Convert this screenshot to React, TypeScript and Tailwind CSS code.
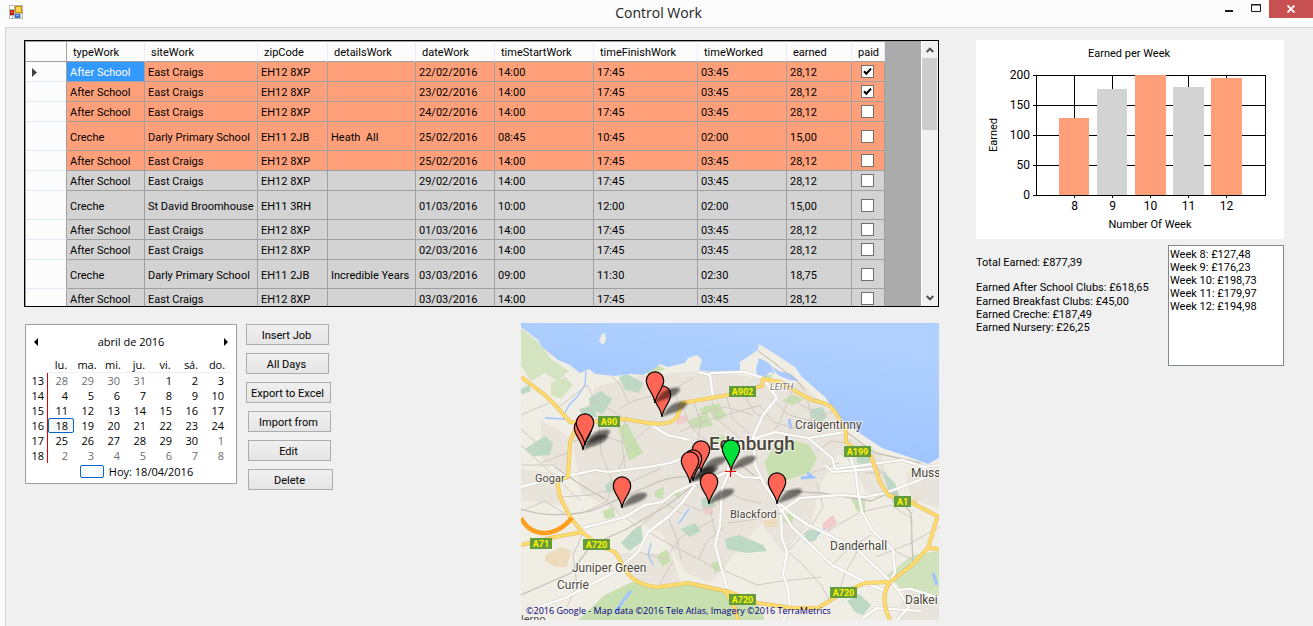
import React from "react";

type Job = {
  type: string;
  site: string;
  zip: string;
  details?: string;
  date: string;
  start: string;
  finish: string;
  worked: string;
  earned: string;
  paid?: boolean;
};

const afterSchool = (date: string, paid = false): Job => ({
  type: "After School",
  site: "East Craigs",
  zip: "EH12 8XP",
  date,
  start: "14:00",
  finish: "17:45",
  worked: "03:45",
  earned: "28,12",
  paid,
});

const jobs: Job[] = [
  afterSchool("22/02/2016", true),
  afterSchool("23/02/2016", true),
  afterSchool("24/02/2016"),
  { type: "Creche", site: "Darly Primary School", zip: "EH11 2JB", details: "Heath  All", date: "25/02/2016", start: "08:45", finish: "10:45", worked: "02:00", earned: "15,00" },
  afterSchool("25/02/2016"),
  afterSchool("29/02/2016"),
  { type: "Creche", site: "St David Broomhouse", zip: "EH11 3RH", date: "01/03/2016", start: "10:00", finish: "12:00", worked: "02:00", earned: "15,00" },
  afterSchool("01/03/2016"),
  afterSchool("02/03/2016"),
  { type: "Creche", site: "Darly Primary School", zip: "EH11 2JB", details: "Incredible Years", date: "03/03/2016", start: "09:00", finish: "11:30", worked: "02:30", earned: "18,75" },
  afterSchool("03/03/2016"),
];

const columns = [
  { name: "typeWork", width: "w-[78px]" },
  { name: "siteWork", width: "w-[113px]" },
  { name: "zipCode", width: "w-[70px]" },
  { name: "detailsWork", width: "w-[88px]" },
  { name: "dateWork", width: "w-[79px]" },
  { name: "timeStartWork", width: "w-[99px]" },
  { name: "timeFinishWork", width: "w-[104px]" },
  { name: "timeWorked", width: "w-[89px]" },
  { name: "earned", width: "w-[65px]" },
  { name: "paid", width: "w-[33px]" },
];

function TitleBar() {
  return (
    <header className="grid h-[27px] grid-cols-[1fr_auto_1fr] items-start">
      <svg className="mt-[5px] ml-[9px]" width="14" height="14" viewBox="0 0 14 14" aria-hidden="true">
        <rect width="14" height="14" fill="#b8b8b8" />
        <path d="M1 1h4v3H1zM1 11h2v2H1zM4 11h1v2H4zM12 9h1v4h-1z" fill="#fff" />
        <rect x="6" y="1" width="7" height="7" fill="#c98f00" />
        <rect x="7" y="2" width="5" height="5" fill="#fcd34a" />
        <rect x="1" y="5" width="4" height="5" fill="#b5200f" />
        <rect x="2" y="6" width="2" height="2" fill="#e2604a" />
        <rect x="6" y="9" width="5" height="4" fill="#3c74cc" />
        <rect x="7" y="10" width="3" height="1" fill="#8ab4f4" />
      </svg>
      <h1 className="pt-[3px] pl-1 font-['Open_Sans','Noto_Sans',sans-serif] text-[14px] leading-[20px] text-[#222]">Control Work</h1>
      <div className="flex justify-end">
        <button type="button" aria-label="Minimize" className="flex h-[18px] w-[28px] items-start justify-center">
          <svg className="mt-[10px]" width="8" height="2"><rect width="8" height="2" fill="#1a1a1a" /></svg>
        </button>
        <button type="button" aria-label="Maximize" className="flex h-[18px] w-[26px] items-start justify-center">
          <svg className="mt-1" width="10" height="8"><path d="M.5 .5h9v7h-9zM0 1h10" fill="none" stroke="#1a1a1a" /></svg>
        </button>
        <button type="button" aria-label="Close" className="flex h-[18px] w-11 items-center justify-center bg-[#c75050]">
          <svg width="8" height="8" viewBox="0 0 8 8"><path d="M.5 .5l7 7M7.500 .5l-7 7" stroke="#fff" strokeWidth="1.800" /></svg>
        </button>
      </div>
    </header>
  );
}

function PaidBox({ checked, label }: { checked?: boolean; label: string }) {
  return (
    <span className="relative mx-auto block size-[13px]">
      <input type="checkbox" defaultChecked={checked} aria-label={label} className="peer block size-[13px] appearance-none border border-[#707070] bg-white" />
      <svg className="pointer-events-none absolute inset-0 hidden peer-checked:block" width="13" height="13" viewBox="0 0 13 13">
        <path d="M3 6.200L5.300 8.700L10 3.600" fill="none" stroke="#000" strokeWidth="2" />
      </svg>
    </span>
  );
}

function JobsGrid() {
  return (
    <div className="flex h-[267px] overflow-hidden border border-black bg-[#ababab]">
      <div className="min-w-0 flex-1 overflow-hidden border-t border-l border-[#a0a0a0]">
        <table className="w-[859px] table-fixed border-separate border-spacing-0 text-left text-[11px] leading-[13px] whitespace-pre">
          <colgroup>
            <col className="w-[41px]" />
            {columns.map((c) => (
              <col key={c.name} className={c.width} />
            ))}
          </colgroup>
          <thead>
            <tr className="h-5 bg-[#fcfcfc]">
              <th aria-label="Row" className="border-r border-b border-[#a0a0a0] p-0" />
              {columns.map((c) => (
                <th key={c.name} className="border-r border-b border-r-[#e3ecfa] border-b-[#a0a0a0] p-0 pt-[2px] pl-[6px] font-normal">{c.name}</th>
              ))}
            </tr>
          </thead>
          <tbody>
            {jobs.map((job, i) => {
              const values = [job.type, job.site, job.zip, job.details ?? "", job.date, job.start, job.finish, job.worked, job.earned];
              return (
                <tr key={i} className={`${job.type === "Creche" ? "h-[29px]" : "h-5"} ${i < 5 ? "bg-[#ffa07a]" : "bg-[#d3d3d3]"}`}>
                  <td className="border-r border-b border-r-[#a0a0a0] border-b-[#e3ecfa] bg-[#fcfcfc] p-0 pt-[2px] pl-[6px]">
                    {i === 0 && <svg width="5" height="9" className="block"><path d="M0 0v9L5 4.500z" fill="#404040" /></svg>}
                  </td>
                  {values.map((v, j) => (
                    <td key={j} className={`border-r border-b border-[#a0a0a0] p-0 pt-[2px] pl-[3px] ${i === 0 && j === 0 ? "bg-[#3399ff] text-white" : ""}`}>{v}</td>
                  ))}
                  <td className="border-r border-b border-[#a0a0a0] p-0 pr-px">
                    <PaidBox checked={job.paid} label={`Paid ${job.date}`} />
                  </td>
                </tr>
              );
            })}
          </tbody>
        </table>
      </div>
      <div className="flex w-[17px] flex-col border-l border-white bg-[#f0f0f0]">
        <button type="button" aria-label="Scroll up" className="flex h-[17px] items-center justify-center">
          <svg width="8" height="6"><path d="M.7 5L4 1.700L7.300 5" fill="none" stroke="#505050" strokeWidth="2" /></svg>
        </button>
        <div className="h-[72px] w-[15px] bg-[#cdcdcd]" />
        <button type="button" aria-label="Scroll down" className="mt-auto flex h-[17px] items-center justify-center">
          <svg width="8" height="6"><path d="M.7 1L4 4.300L7.300 1" fill="none" stroke="#505050" strokeWidth="2" /></svg>
        </button>
      </div>
    </div>
  );
}

const weeks = [
  { n: 13, days: [28, 29, 30, 31, 1, 2, 3] },
  { n: 14, days: [4, 5, 6, 7, 8, 9, 10] },
  { n: 15, days: [11, 12, 13, 14, 15, 16, 17] },
  { n: 16, days: [18, 19, 20, 21, 22, 23, 24] },
  { n: 17, days: [25, 26, 27, 28, 29, 30, 1] },
  { n: 18, days: [2, 3, 4, 5, 6, 7, 8] },
];

const outside = (week: number, day: number) => (week === 13 && day > 20) || (week >= 17 && day < 20);

function Calendar() {
  return (
    <section aria-label="Calendar" className="h-[160px] w-[212px] border border-[#a0a0a0] bg-white pr-[6px] pl-[5px] font-['Open_Sans','Noto_Sans',sans-serif] text-[11px] text-black">
      <div className="flex h-8 items-center justify-between pt-px pr-[2px] pl-[3px]">
        <button type="button" aria-label="Previous month"><svg width="4" height="8"><path d="M4 0v8L0 4z" /></svg></button>
        <span>abril de 2016</span>
        <button type="button" aria-label="Next month"><svg width="4" height="8"><path d="M0 0v8L4 4z" /></svg></button>
      </div>
      <table className="w-full table-fixed border-separate border-spacing-0 leading-[15px]">
        <colgroup>
          <col className="w-[17px]" />
        </colgroup>
        <thead>
          <tr className="h-[15px]">
            <th aria-label="Week" className="p-0" />
            {["lu.", "ma.", "mi.", "ju.", "vi.", "sá.", "do."].map((d) => (
              <th key={d} className="border-b border-[#f0f0f0] p-0 text-center font-normal">{d}</th>
            ))}
          </tr>
        </thead>
        <tbody>
          {weeks.map((w) => (
            <tr key={w.n} className="h-[15px]">
              <th className="border-r border-[#e00000] p-0 pr-[3px] text-right font-normal">{w.n}</th>
              {w.days.map((d, i) => (
                <td key={i} className={`p-0 pr-[6px] text-right ${outside(w.n, d) ? "text-[#6d6d6d]" : ""} ${w.n === 16 && i === 0 ? "rounded-[2px] bg-[#f7f7f7] outline outline-[#0066cc] -outline-offset-1" : ""}`}>{d}</td>
              ))}
            </tr>
          ))}
        </tbody>
      </table>
      <div className="flex items-center justify-center gap-[5px] pl-3 leading-[17px]">
        <span className="h-[13px] w-6 rounded-[2px] border border-[#0066cc]" />
        <span>Hoy: 18/04/2016</span>
      </div>
    </section>
  );
}

function Action({ label, wide }: { label: string; wide?: boolean }) {
  return (
    <button type="button" className={`${wide ? "w-[85px]" : "w-[83px]"} h-[21px] border border-[#acacac] bg-linear-to-b from-[#f0f0f0] to-[#e5e5e5] pt-px pr-[2px] text-center text-[11px] leading-[13px] whitespace-nowrap`}>
      {label}
    </button>
  );
}

function Pin({ x, y, fill = "#ff6455" }: { x: number; y: number; fill?: string }) {
  return (
    <g transform={`translate(${x} ${y})`}>
      <path d="M0 0C4 -8 9 -14 18 -15C25 -16 27 -14 23 -10C18 -5 8 -4 0 0Z" fill="#000" opacity=".5" filter="url(#soft)" />
      <path d="M0 0C-1 -10 -8.700 -14 -8.700 -22.500A8.700 8.700 0 0 1 8.700 -22.500C8.700 -14 1 -10 0 0Z" fill={fill} stroke="#000" strokeWidth="1.200" />
    </g>
  );
}

const minorRoads = [
  "M57 100L74 78L66 62L37 85M74 78L105 96M104 96L101 120L104 146M131 102L110 120L98 146M78 100L80 130L92 160",
  "M98 86L112 78L150 68L172 55M108 80L98 60L90 53M152 70L160 80L170 104L190 122M172 76L180 100L176 122M190 74L196 96L222 118",
  "M176 92L204 84L232 92M160 108L190 96L240 82M205 72L212 96L228 110M222 70L234 90L246 96M250 76L268 92L290 98L312 88M262 60L280 82L300 92",
  "M239 83L252 99L280 107L304 90M270 70L260 96L252 110M286 74L292 104M296 128L310 118L326 120M290 150L318 140",
  "M0 92L28 80M0 122L30 150L60 178M0 106L20 124M48 119L80 112L104 120M46 130L20 140M0 142L34 142",
  "M39 174L70 172L104 162L140 145M49 194L24 178L0 188M62 190L86 178L101 194M86 178L92 160M62 210L52 232L56 262L46 284",
  "M104 194L118 205L144 180L160 190M127 209L150 222L178 236L198 248M117 229L144 236L160 214L194 196M178 236L186 218L204 204",
  "M147 194L156 216L160 236M161 180L180 188L204 178M174 160L186 174L190 190L194 210M137 264L152 238",
  "M201 165L220 176L240 180M207 200L236 196L260 190M204 248L236 262L262 258L300 254M264 226L280 240L300 262L310 280",
  "M266 229L282 212L290 204M290 204L302 184L296 160M304 210L320 200L338 190M311 242L330 224L350 212M337 227L324 250L318 270",
  "M341 189L370 182L391 196L390 222M355 234L390 220L418 204M334 142L320 130L330 116M344 150L366 150M372 227L390 236M360 150L350 134L330 130",
];

const whiteRoads = [
  "M62 205L104 194L124 182L141 179L154 169L174 160",
  "M174 162L161 180L147 194L127 209L117 229L94 249L44 275L4 289",
  "M0 164L27 157L74 147L87 149L127 144L149 140L169 132",
  "M256 75L242 92L232 114L234 142L242 159L259 185L271 204L311 242L344 259L366 269",
  "M257 179L271 191L287 202L304 210L337 227L371 260L377 267L390 266L418 275",
  "M260 192L261 215L266 229L262 252L267 265L269 285L262 297",
  "M259 189L279 175L321 172L344 174L364 170L391 160L418 149",
  "M334 142L337 169L341 189L351 207L372 227L374 249L369 259",
  "M232 116L254 109L287 115L324 109M287 115L311 135L314 146L381 137L404 144L418 142M325 119L332 142",
  "M177 49L189 52L192 74M189 50L224 49L242 55L256 75",
  "M207 142L207 152L201 165L199 202L194 222L206 265M207 145L222 154L239 155",
  "M131 102L146 112L169 117M304 142L312 149L352 146",
  "M342 295L356 285L400 288M377 267L388 284L376 297M174 160L188 158L207 148",
];

const yellowRoads = [
  "M0 54L24 72L37 85L49 99L57 100L104 96L127 100Q150 103 156 94L161 80L207 72L241 63L242 56L259 59L276 69L291 77Q305 80 310 84Q318 93 325 109L325 119L336 128L350 133L355 147L359 159L367 172L391 180L418 194",
  "M57 100L49 119L47 154L36 157L39 174L49 194L62 210L81 224L94 229L106 249Q114 262 137 264L167 260L209 269L237 280L271 285L297 285L321 270L344 260L369 259L391 242L407 225L416 195",
  "M0 222L34 214L62 209M369 259Q358 274 369 297M407 225L418 226M204 268L214 285L217 297",
];

const towns = [
  { x: 249, y: 67, s: 9, t: "LEITH", italic: true },
  { x: 274, y: 106, s: 12, t: "Craigentinny" },
  { x: 14, y: 159, s: 11, t: "Gogar" },
  { x: 209, y: 195, s: 11, t: "Blackford" },
  { x: 309, y: 227, s: 12, t: "Danderhall" },
  { x: 51, y: 249, s: 12, t: "Juniper Green" },
  { x: 36, y: 266, s: 12, t: "Currie" },
  { x: 390, y: 154, s: 12, t: "Muss" },
  { x: 384, y: 281, s: 12, t: "Dalkei" },
  { x: 0, y: 300, s: 11, t: "lerno" },
];

const shields = [
  { x: 77, y: 93, w: 22, t: "A90" },
  { x: 208, y: 63, w: 27, t: "A902" },
  { x: 323, y: 123, w: 27, t: "A199" },
  { x: 9, y: 215, w: 22, t: "A71" },
  { x: 62, y: 216, w: 27, t: "A720" },
  { x: 373, y: 173, w: 17, t: "A1" },
  { x: 309, y: 264, w: 27, t: "A720" },
  { x: 208, y: 271, w: 27, t: "A720" },
];

function CityMap() {
  return (
    <svg role="img" aria-label="Map of Edinburgh" width="418" height="297" viewBox="0 0 418 297" className="block shrink-0 overflow-hidden">
      <defs>
        <filter id="soft"><feGaussianBlur stdDeviation="0.8" /></filter>
        <linearGradient id="sea" x1="0" y1="1" x2=".4" y2="0">
          <stop offset="0" stopColor="#98bfff" />
          <stop offset="1" stopColor="#b0d1ff" />
        </linearGradient>
      </defs>
      <rect width="418" height="297" fill="#f0ede5" />
      <g fill="#e8e3db">
        <path d="M74 64L110 54L180 48L240 55L280 60L318 97L325 119L300 160L290 200L262 230L240 200L190 260L165 250L140 210L80 180L60 170L52 120L60 98Z" />
        <path d="M95 230L150 230L160 262L117 259ZM0 146L34 150L40 182L0 178ZM384 150L418 145V186L390 175ZM384 266L418 272V297H376ZM320 112L360 130L370 170L345 170ZM20 98L52 116L46 150L20 136Z" />
      </g>
      <g fill="#c8dfb0">
        <path d="M57 297L84 272L111 259L137 265L167 261L209 270L237 281L244 297Z" />
        <path d="M244 139L252 125L272 117L288 122L296 135L289 149L266 157L247 152Z" />
        <path d="M0 5L18 20L30 36L48 48L36 58L24 50L10 58L0 42ZM30 60L44 54L52 62L40 76L30 72Z" opacity=".7" />
        <path d="M97 104L106 100L122 130L108 138ZM166 98L186 90L192 103L172 106ZM187 84L198 80L206 94L194 98ZM134 168L143 164L142 176L134 174ZM82 188L92 184L94 194L84 196ZM178 86L188 82L192 88L182 92ZM188 114L202 112L208 120L190 122ZM260 78L272 72L284 76L272 82ZM330 176L344 174L344 190L336 188ZM190 240L200 238L204 246L194 250ZM135 233L146 226L150 238L142 244ZM122 50L136 42L144 46L132 52ZM262 192L274 190L270 202L262 198ZM238 52L252 52L244 60ZM204 140L214 136L212 146ZM150 170L160 166L158 176Z" />
        <path d="M366 252L392 232L418 228V272L380 265Z" opacity=".8" />
      </g>
      <g fill="#bdd8c4">
        <path d="M98 54L106 51L122 60L118 70L104 67ZM68 75L80 68L91 76L82 91L70 87ZM58 86L72 82L76 94L62 94ZM4 126L24 113L32 120L29 132L12 133ZM100 220L112 207L120 202L122 218L108 228ZM84 162L94 156L94 168L86 170ZM160 206L174 200L180 208L168 214ZM290 86L302 84L306 94L300 100L290 94ZM204 216L218 212L242 222L246 228L226 230L206 226ZM284 210L294 204L300 208L294 218L284 220ZM326 278L338 271L350 282L342 292L334 289ZM180 176L192 172L194 184L182 186ZM336 134L350 130L348 142L336 140ZM0 66L8 62L10 68L0 72ZM360 146L374 160L382 182L372 180Z" />
      </g>
      <path d="M24 232L40 224L50 228L46 244L34 244L24 238ZM242 198L256 194L256 204L244 204ZM388 176L398 174L396 182L388 180Z" fill="#ecdcbd" />
      <path d="M302 200L312 192L316 200L308 207L302 206ZM154 94L164 92L168 98L156 102ZM183 184L192 184L192 191L184 192ZM182 150L190 148L192 156L184 156Z" fill="#f1cbc9" />
      <path d="M0 0H418V135L407 141L391 135L361 125L334 107L319 97L304 74L281 54L274 44L251 29L238 21L237 27L219 39L219 47L209 49L191 49L178 47L181 37L176 32L167 35L164 40L147 44L139 41L131 47L122 52L109 51L94 53L74 51L68 46L59 50L49 42L37 37L21 24L17 17L0 4Z" fill="url(#sea)" />
      <path d="M81 11L84 10L85 17L82 22L78 18Z" fill="#f0ede5" />
      <path d="M235 46L238 35L248 40L254 51L249 49L244 54L236 52ZM249 42L258 48L270 51L278 58L268 57L257 52Z" fill="#accbff" />
      <path d="M237 28L251 38L266 50L278 60L284 68" fill="none" stroke="#bcb8b0" />
      <g fill="none" stroke="#9fc4ff" strokeWidth="1.300">
        <path d="M65 48L64 62L56 74L48 82L42 94M24 95L44 96M130 220L127 232L132 242M168 186L158 200M296 212L304 206" />
        <path d="M94 290L102 278L110 268M280 155L292 154L286 150M268 96L270 106M412 250L416 262" strokeWidth="3" />
      </g>
      <g fill="none" stroke="#c5c1bb" strokeWidth="1.300">
        <path d="M0 186Q30 196 70 188L130 162Q150 152 174 154M0 272L50 250L70 222L104 207L147 182L180 156M34 144L60 162L84 176" />
        <path d="M180 156L220 142L240 158L262 168L300 170L350 178L372 168L390 190L392 244M324 108L354 130L400 140" />
      </g>
      <g fill="none" stroke="#d0cac1" strokeWidth="1">{minorRoads.map((d) => <path key={d} d={d} />)}</g>
      <g fill="none" stroke="#d9d5cd" strokeWidth="3.400" strokeLinejoin="round">{whiteRoads.map((d) => <path key={d} d={d} />)}</g>
      <g fill="none" stroke="#fff" strokeWidth="2.200" strokeLinejoin="round">{whiteRoads.map((d) => <path key={d} d={d} />)}</g>
      <g fill="none" stroke="#e3bd62" strokeWidth="4" strokeLinejoin="round">{yellowRoads.map((d) => <path key={d} d={d} />)}</g>
      <g fill="none" stroke="#ffdc6e" strokeWidth="2.800" strokeLinejoin="round">{yellowRoads.map((d) => <path key={d} d={d} />)}</g>
      <path d="M0 195Q8 210 24 210Q38 210 51 195" fill="none" stroke="#ff9f1f" strokeWidth="4.500" />
      {shields.map((s, i) => (
        <g key={i}>
          <rect x={s.x} y={s.y} width={s.w} height="11" fill="#659c3b" />
          <text x={s.x + s.w / 2} y={s.y + 9} textAnchor="middle" fill="#fff200" className="font-[Roboto,sans-serif] text-[9px] font-bold">{s.t}</text>
        </g>
      ))}
      <g className="font-[Roboto,sans-serif]" fill="#4b463b" stroke="#fff" strokeOpacity=".7" strokeWidth="2" paintOrder="stroke">
        {towns.map((t) => (
          <text key={t.t} x={t.x} y={t.y} fontSize={t.s} fontStyle={t.italic ? "italic" : "normal"} fill={t.italic ? "#777268" : undefined}>{t.t}</text>
        ))}
        <text x="188" y="127" fontSize="19" className="font-medium">Edinburgh</text>
      </g>
      <Pin x={141} y={94} />
      <Pin x={134} y={80} />
      <Pin x={62} y={127} />
      <Pin x={64} y={122} />
      <Pin x={180} y={149} />
      <Pin x={172} y={158} />
      <Pin x={169} y={160} />
      <Pin x={101} y={185} />
      <Pin x={188} y={181} />
      <Pin x={256} y={181} />
      <Pin x={210} y={148} fill="#00e13c" />
      <path d="M204 148.500H215M209.500 143V154" stroke="#f00" />
      <text x="5" y="291" fill="#000080" className="font-['Open_Sans',sans-serif] text-[9px]">©2016 Google - Map data ©2016 Tele Atlas, Imagery ©2016 TerraMetrics</text>
    </svg>
  );
}

const bars = [
  { week: 8, x: 83, top: 78, w: 30, fill: "#ffa07a" },
  { week: 9, x: 121, top: 49, w: 30, fill: "#d3d3d3" },
  { week: 10, x: 159, top: 35, w: 31, fill: "#ffa07a" },
  { week: 11, x: 197, top: 47, w: 31, fill: "#d3d3d3" },
  { week: 12, x: 235, top: 38, w: 31, fill: "#ffa07a" },
];

function EarnedChart() {
  return (
    <svg role="img" aria-label="Earned per Week" width="308" height="199" viewBox="0 0 308 199" className="block bg-white font-[Roboto,sans-serif]">
      <text x="153" y="17" textAnchor="middle" className="text-[11px]">Earned per Week</text>
      {[200, 150, 100, 50, 0].map((v, i) => (
        <g key={v}>
          <path d={`M57 ${35.5 + i * 30}H290`} stroke="#000" />
          <text x="54" y={39 + i * 30} textAnchor="end" className="text-[12px]">{v}</text>
        </g>
      ))}
      <path d="M60.500 35V156M289.500 35V156" stroke="#000" />
      {bars.map((b, i) => (
        <g key={b.week}>
          <path d={`M${98.5 + i * 38} 35V158`} stroke="#000" />
          <rect x={b.x} y={b.top} width={b.w} height={155 - b.top} fill={b.fill} />
          <text x={98.5 + i * 38} y="170" textAnchor="middle" className="text-[12px]">{b.week}</text>
        </g>
      ))}
      <text x="174" y="188" textAnchor="middle" className="text-[11px]">Number Of Week</text>
      <text transform="translate(21 95) rotate(-90)" textAnchor="middle" className="text-[11px]">Earned</text>
    </svg>
  );
}

export default function App() {
  return (
    <div className="flex min-h-screen flex-col bg-[#fcfcfc] font-[Roboto,'Liberation_Sans',sans-serif] text-[11px] leading-[13px] text-black">
      <TitleBar />
      <main className="ml-[5px] flex flex-1 gap-[37px] border-t border-l border-[#d4d4d4] bg-[#f0f0f0] pt-3 pr-[29px] pb-[6px] pl-[18px]">
        <div className="min-w-0 flex-1">
          <JobsGrid />
          <div className="mt-4 flex justify-between">
            <div className="flex items-start gap-[9px] pt-px pl-px">
              <Calendar />
              <div className="flex flex-col gap-2">
                <Action label="Insert Job" />
                <Action label="All Days" />
                <Action label="Export to Excel" wide />
                <div className="flex flex-col gap-2 pl-[2px]">
                  <Action label="Import from" />
                  <Action label="Edit" />
                  <Action label="Delete" wide />
                </div>
              </div>
            </div>
            <CityMap />
          </div>
        </div>
        <aside className="w-[308px] shrink-0">
          <EarnedChart />
          <div className="mt-[6px] flex items-start justify-between">
            <div className="pt-[11px] whitespace-nowrap">
              <p className="mb-3">Total Earned: £877,39</p>
              <p className="mb-px">Earned After School Clubs: £618,65</p>
              <p>Earned Breakfast Clubs: £45,00</p>
              <p>Earned Creche: £187,49</p>
              <p>Earned Nursery: £26,25</p>
            </div>
            <select size={9} aria-label="Earned by week" className="h-[121px] w-[116px] appearance-none overflow-hidden rounded-none border border-[#828790] bg-white p-0 pt-[2px] pl-px text-[11px] leading-[13px]">
              {["Week 8: £127,48", "Week 9: £176,23", "Week 10: £198,73", "Week 11: £179,97", "Week 12: £194,98"].map((t) => (
                <option key={t} className="h-[13px] min-h-0 p-0 leading-[13px]">{t}</option>
              ))}
            </select>
          </div>
        </aside>
      </main>
    </div>
  );
}
